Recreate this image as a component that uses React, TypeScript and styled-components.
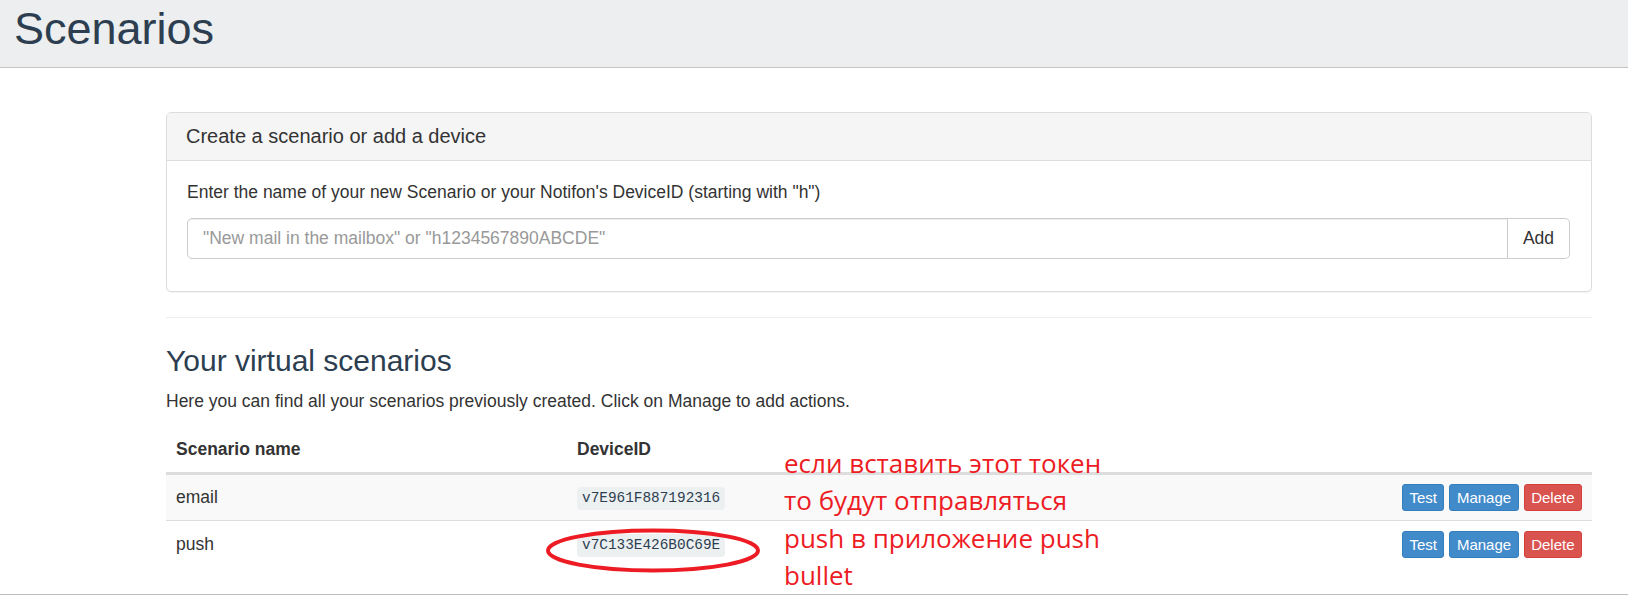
import React from "react";
import styled, { createGlobalStyle } from "styled-components";

const GlobalStyle = createGlobalStyle`
  html, body { margin: 0; padding: 0; background: #fff; }
  body { font-family: "Liberation Sans", Arial, sans-serif; color: #333; font-size: 17.5px; }
  * { box-sizing: border-box; }
`;

const Page = styled.div`
  position: relative;
  min-height: 595px;
  border-bottom: 1px solid #bdbdbd;
`;

const TopBar = styled.header`
  height: 68px;
  background: #eceeef;
  border-bottom: 1px solid #c4c4c4;
  padding: 4px 0 0 14px;
`;

const PageTitle = styled.h1`
  margin: 0;
  font-size: 45px;
  font-weight: 400;
  line-height: 49.5px;
  color: #2c3e50;
`;

const Main = styled.main`
  margin: 44px 0 0 166px;
  width: 1426px;
`;

const Panel = styled.section`
  border: 1px solid #dddddd;
  border-radius: 5px;
  background: #fff;
  box-shadow: 0 1px 1px rgba(0, 0, 0, 0.05);
`;

const PanelHeading = styled.div`
  height: 48px;
  padding: 0 19px;
  background: #f5f5f5;
  border-bottom: 1px solid #dddddd;
  border-radius: 4px 4px 0 0;
  font-size: 20px;
  line-height: 47px;
  color: #333;
`;

const PanelBody = styled.div`
  padding: 19px 21px 32px 20px;
`;

const Label = styled.div`
  font-size: 17.5px;
  line-height: 25px;
  margin-bottom: 13px;
`;

const InputGroup = styled.div`
  display: flex;
  height: 41px;
`;

const TextInput = styled.input`
  flex: 1;
  height: 41px;
  border: 1px solid #cccccc;
  border-radius: 5px 0 0 5px;
  padding: 0 15px;
  font-family: "Liberation Sans", Arial, sans-serif;
  font-size: 17.5px;
  color: #333;
  outline: none;
  box-shadow: inset 0 1px 1px rgba(0, 0, 0, 0.075);
  &::placeholder { color: #999; }
`;

const AddButton = styled.button`
  width: 62px;
  height: 41px;
  border: 1px solid #cccccc;
  border-left: none;
  border-radius: 0 5px 5px 0;
  background: #fff;
  font-family: "Liberation Sans", Arial, sans-serif;
  font-size: 17.5px;
  color: #333;
  padding: 0;
`;

const Rule = styled.hr`
  margin: 25px 0 0;
  border: 0;
  border-top: 1px solid #eeeeee;
`;

const SectionTitle = styled.h3`
  margin: 26px 0 0;
  font-size: 30px;
  font-weight: 400;
  line-height: 33px;
  color: #2c3e50;
`;

const Lead = styled.p`
  margin: 12px 0 0;
  font-size: 17.5px;
  line-height: 25px;
`;

const Table = styled.table`
  margin-top: 13px;
  width: 100%;
  border-collapse: collapse;
  font-size: 17.5px;
`;

const HeadCell = styled.th<{ $w?: number }>`
  text-align: left;
  font-weight: 700;
  padding: 10px 10px;
  line-height: 25px;
  border-bottom: 3px solid #dddddd;
  ${(p) => (p.$w ? `width: ${p.$w}px;` : "")}
`;

const Row = styled.tr<{ $striped?: boolean }>`
  background: ${(p) => (p.$striped ? "#f9f9f9" : "transparent")};
`;

const Cell = styled.td<{ $right?: boolean }>`
  height: 47px;
  padding: 0 10px;
  line-height: 25px;
  vertical-align: middle;
  border-top: 1px solid #dddddd;
  text-align: ${(p) => (p.$right ? "right" : "left")};
`;

const Code = styled.code`
  display: inline-block;
  padding: 2.5px 5px;
  line-height: 18px;
  font-family: "Liberation Mono", "DejaVu Sans Mono", monospace;
  font-size: 14.4px;
  color: #2c3e50;
  background: #ecf0f1;
  border-radius: 4px;
  vertical-align: middle;
`;

const Actions = styled.div`
  display: flex;
  justify-content: flex-end;
  gap: 5px;
`;

const SmallButton = styled.button<{ $variant: "primary" | "danger" }>`
  height: 27px;
  padding: 0 6.5px;
  border-radius: 3px;
  font-family: "Liberation Sans", Arial, sans-serif;
  font-size: 15px;
  color: #fff;
  background: ${(p) => (p.$variant === "danger" ? "#d9534f" : "#428bca")};
  border: 1px solid ${(p) => (p.$variant === "danger" ? "#d43f3a" : "#357ebd")};
`;

const Note = styled.div`
  position: absolute;
  left: 784px;
  top: 445px;
  font-family: "Open Sans", "Noto Sans", sans-serif;
  font-size: 26px;
  line-height: 37.3px;
  color: #ed1c24;
  white-space: nowrap;
`;

const Circle = styled.svg`
  position: absolute;
  left: 545px;
  top: 528px;
`;

const rows = [
  { name: "email", id: "v7E961F887192316" },
  { name: "push", id: "v7C133E426B0C69E" },
];

export default function App() {
  return (
    <Page>
      <GlobalStyle />
      <TopBar>
        <PageTitle>Scenarios</PageTitle>
      </TopBar>
      <Main>
        <Panel>
          <PanelHeading>Create a scenario or add a device</PanelHeading>
          <PanelBody>
            <Label>Enter the name of your new Scenario or your Notifon's DeviceID (starting with "h")</Label>
            <InputGroup>
              <TextInput placeholder={'"New mail in the mailbox" or "h1234567890ABCDE"'} />
              <AddButton>Add</AddButton>
            </InputGroup>
          </PanelBody>
        </Panel>
        <Rule />
        <SectionTitle>Your virtual scenarios</SectionTitle>
        <Lead>Here you can find all your scenarios previously created. Click on Manage to add actions.</Lead>
        <Table>
          <thead>
            <tr>
              <HeadCell $w={401}>Scenario name</HeadCell>
              <HeadCell $w={500}>DeviceID</HeadCell>
              <HeadCell />
            </tr>
          </thead>
          <tbody>
            {rows.map((r, i) => (
              <Row key={r.id} $striped={i % 2 === 0}>
                <Cell>{r.name}</Cell>
                <Cell>
                  <Code>{r.id}</Code>
                </Cell>
                <Cell $right>
                  <Actions>
                    <SmallButton $variant="primary">Test</SmallButton>
                    <SmallButton $variant="primary">Manage</SmallButton>
                    <SmallButton $variant="danger">Delete</SmallButton>
                  </Actions>
                </Cell>
              </Row>
            ))}
          </tbody>
        </Table>
      </Main>
      <Note>
        если вставить этот токен
        <br />
        то будут отправляться
        <br />
        push в приложение push
        <br />
        bullet
      </Note>
      <Circle width="216" height="45" viewBox="0 0 216 45">
        <ellipse cx="108" cy="22.5" rx="105" ry="20" fill="none" stroke="#ed1c24" strokeWidth="4" />
      </Circle>
    </Page>
  );
}
